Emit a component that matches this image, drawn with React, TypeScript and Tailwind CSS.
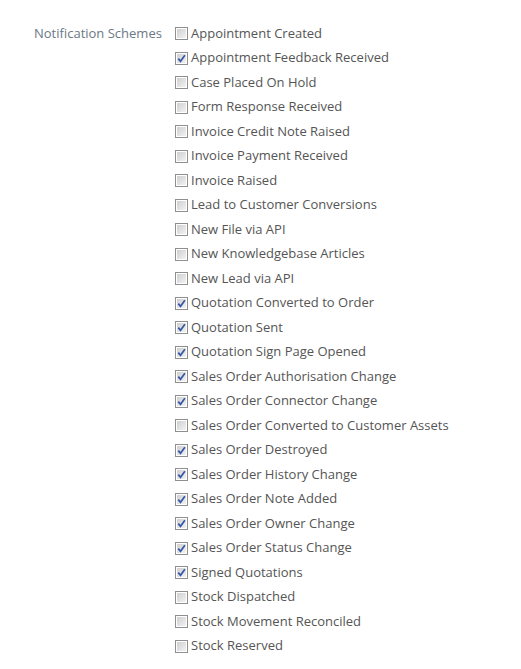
import React, { useState } from "react";

const schemes: [string, boolean][] = [
  ["Appointment Created", false],
  ["Appointment Feedback Received", true],
  ["Case Placed On Hold", false],
  ["Form Response Received", false],
  ["Invoice Credit Note Raised", false],
  ["Invoice Payment Received", false],
  ["Invoice Raised", false],
  ["Lead to Customer Conversions", false],
  ["New File via API", false],
  ["New Knowledgebase Articles", false],
  ["New Lead via API", false],
  ["Quotation Converted to Order", true],
  ["Quotation Sent", true],
  ["Quotation Sign Page Opened", true],
  ["Sales Order Authorisation Change", true],
  ["Sales Order Connector Change", true],
  ["Sales Order Converted to Customer Assets", false],
  ["Sales Order Destroyed", true],
  ["Sales Order History Change", true],
  ["Sales Order Note Added", true],
  ["Sales Order Owner Change", true],
  ["Sales Order Status Change", true],
  ["Signed Quotations", true],
  ["Stock Dispatched", false],
  ["Stock Movement Reconciled", false],
  ["Stock Reserved", false],
];

const Box = ({ checked }: { checked: boolean }) => (
  <span className="w-[13px] h-[13px] border border-[#8f8f8f] p-px bg-white flex shrink-0 mt-px">
    <span className="flex-1 bg-gradient-to-br from-[#cfcfcf] to-[#f2f2f2] flex items-center justify-center">
      {checked && (
        <svg width="9" height="9" viewBox="0 0 9 9">
          <path d="M1.3 4.6 L3.5 7.3 L7.9 1.2" fill="none" stroke="#3656a8" strokeWidth="1.7" />
        </svg>
      )}
    </span>
  </span>
);

export default function App() {
  const [items, setItems] = useState(schemes);

  const toggle = (i: number) => {
    setItems((prev) => prev.map((s, j) => (j === i ? [s[0], !s[1]] : s)));
  };

  return (
    <div
      className="bg-white w-[521px] h-[669px] flex pt-[21px] text-[13px]"
      style={{ fontFamily: '"Open Sans", sans-serif' }}
    >
      <div className="w-[163px] pl-[34px] text-[#6b7885] h-[24.5px] flex items-center">
        Notification Schemes
      </div>
      <div className="flex flex-col pl-[12px]">
        {items.map(([name, checked], i) => (
          <label
            key={name}
            className="h-[24.5px] flex items-center gap-[3px] text-[#555] cursor-pointer"
            onClick={() => toggle(i)}
          >
            <Box checked={checked} />
            <span>{name}</span>
          </label>
        ))}
      </div>
    </div>
  );
}
